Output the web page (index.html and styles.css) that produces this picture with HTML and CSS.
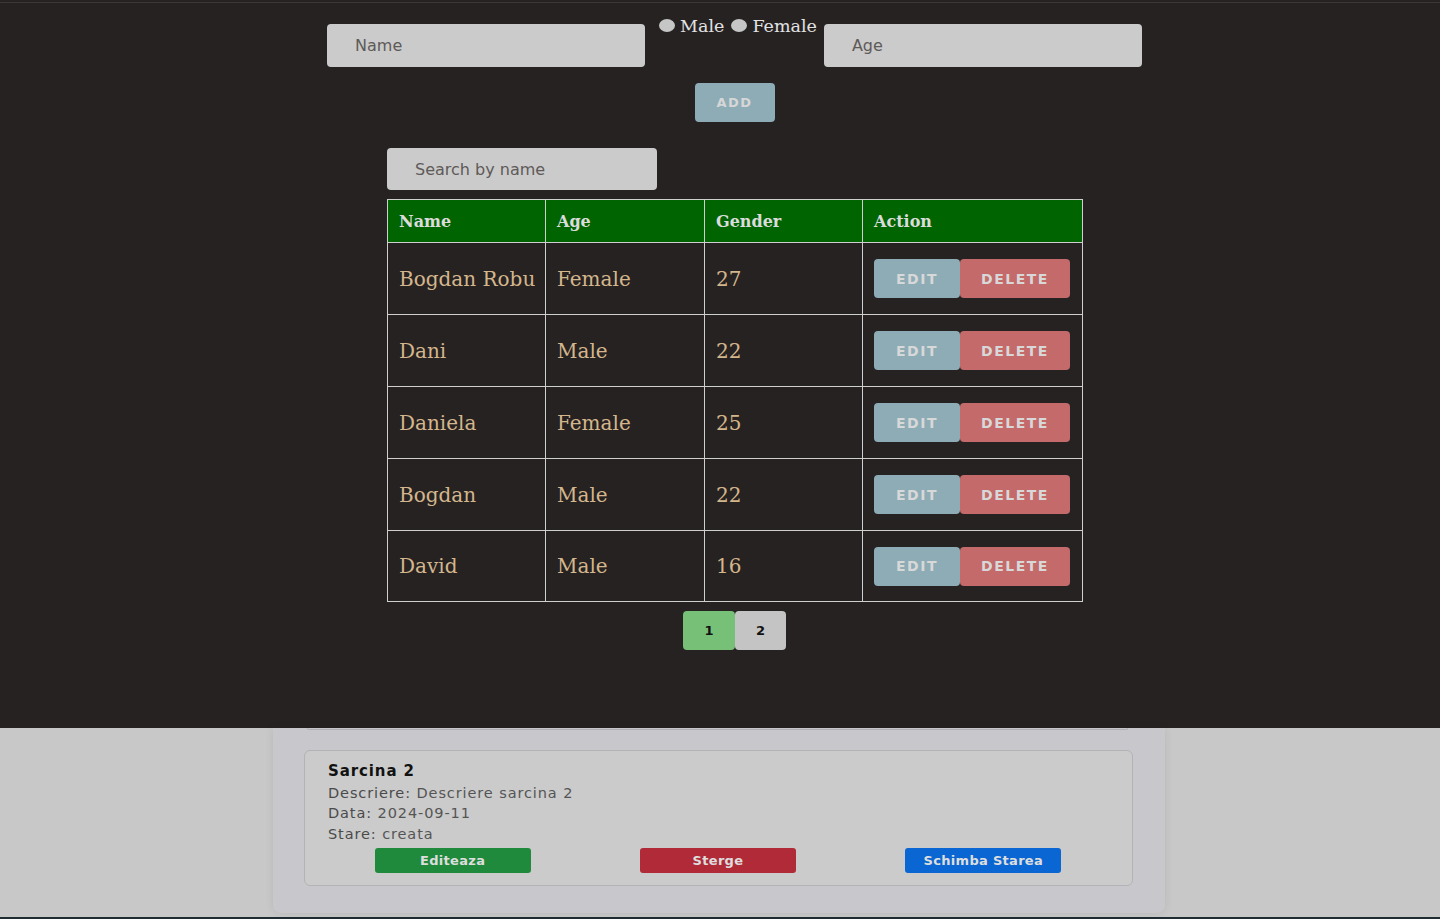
FILE: index.html
```html
<!DOCTYPE html>
<html lang="en">
<head>
<meta charset="utf-8">
<title>People</title>
<link rel="stylesheet" href="styles.css">
</head>
<body>
<section class="top">
  <div class="topline"></div>
  <div class="form-row">
    <div class="field">Name</div>
    <div class="radios">
      <span class="radio"></span><span class="rlabel">Male</span>
      <span class="radio r2"></span><span class="rlabel">Female</span>
    </div>
    <div class="field age">Age</div>
  </div>
  <div class="add-row"><button class="btn-add">ADD</button></div>
  <div class="list">
    <div class="search">Search by name</div>
    <table class="people">
      <thead>
        <tr><th class="c1">Name</th><th class="c2">Age</th><th class="c3">Gender</th><th class="c4">Action</th></tr>
      </thead>
      <tbody>
        <tr><td>Bogdan Robu</td><td>Female</td><td>27</td><td><div class="acts"><button class="edit">EDIT</button><button class="del">DELETE</button></div></td></tr>
        <tr><td>Dani</td><td>Male</td><td>22</td><td><div class="acts"><button class="edit">EDIT</button><button class="del">DELETE</button></div></td></tr>
        <tr><td>Daniela</td><td>Female</td><td>25</td><td><div class="acts"><button class="edit">EDIT</button><button class="del">DELETE</button></div></td></tr>
        <tr><td>Bogdan</td><td>Male</td><td>22</td><td><div class="acts"><button class="edit">EDIT</button><button class="del">DELETE</button></div></td></tr>
        <tr><td>David</td><td>Male</td><td>16</td><td><div class="acts"><button class="edit">EDIT</button><button class="del">DELETE</button></div></td></tr>
      </tbody>
    </table>
    <div class="pager"><button class="pg active">1</button><button class="pg">2</button></div>
  </div>
</section>
<section class="lower">
  <div class="panel">
    <div class="card-tail"></div>
    <div class="card">
      <div class="card-text">
        <h3 class="card-title">Sarcina 2</h3>
        <p class="line"><span class="lbl">Descriere:</span> Descriere sarcina 2</p>
        <p class="line"><span class="lbl">Data:</span> 2024-09-11</p>
        <p class="line"><span class="lbl">Stare:</span> creata</p>
      </div>
      <div class="card-actions">
        <button class="cbtn green">Editeaza</button>
        <button class="cbtn red">Sterge</button>
        <button class="cbtn blue">Schimba Starea</button>
      </div>
    </div>
  </div>
</section>
</body>
</html>
```

FILE: styles.css
```css
* { box-sizing: border-box; }
html, body { margin: 0; padding: 0; }
body {
  width: 1440px;
  height: 919px;
  overflow: hidden;
  background: #c8c8c8;
  font-family: "DejaVu Sans", sans-serif;
}
button { font-family: "DejaVu Sans", sans-serif; cursor: pointer; }

.top {
  height: 728px;
  background: #262222;
  padding-top: 2px;
  padding-left: 29px;
}
.topline {
  height: 1px;
  background: #3a3838;
  margin-left: -29px;
}

.form-row {
  display: flex;
  justify-content: center;
  align-items: flex-start;
  margin-top: 12px;
}
.field {
  width: 318px;
  height: 43px;
  margin-top: 9px;
  background: #cbcbcb;
  border-radius: 4px;
  padding-left: 28px;
  display: flex;
  align-items: center;
  font-size: 16px;
  color: #5e5a58;
}
.radios {
  display: flex;
  align-items: flex-start;
  margin: 0 7px 0 14px;
  font-family: "DejaVu Serif", serif;
  font-size: 17.5px;
  line-height: 22px;
  color: #e2e2e2;
}
.radio {
  width: 16px;
  height: 13px;
  margin-top: 4px;
  margin-right: 5px;
  border-radius: 50%;
  background: #c6c6c6;
}
.radio.r2 { margin-left: 7px; }

.add-row {
  display: flex;
  justify-content: center;
  margin-top: 16px;
}
.btn-add {
  width: 80px;
  height: 39px;
  border: none;
  border-radius: 4px;
  background: #8eacb6;
  color: #d6d6d6;
  font-weight: bold;
  font-size: 13px;
  letter-spacing: 1.5px;
}

.list {
  width: 695px;
  margin: 26px auto 0;
}
.search {
  width: 270px;
  height: 42px;
  background: #cbcbcb;
  border-radius: 4px;
  padding-left: 28px;
  display: flex;
  align-items: center;
  font-size: 16px;
  color: #5e5a58;
}

.people {
  margin-top: 9px;
  width: 695px;
  border-collapse: collapse;
  table-layout: fixed;
  font-family: "DejaVu Serif", serif;
}
.people th, .people td {
  border: 1px solid #cfcfcf;
  text-align: left;
  padding: 0 0 0 11px;
}
.people th {
  height: 43px;
  background: #006400;
  color: #dcdcdc;
  font-size: 16px;
  font-weight: bold;
}
.c1 { width: 158px; }
.c2 { width: 159px; }
.c3 { width: 158px; }
.c4 { width: 220px; }
.people td {
  height: 72px;
  color: #d4b68c;
  font-size: 20px;
}
.people tbody tr:last-child td { height: 71px; }
.acts { display: flex; }
.edit, .del {
  height: 39px;
  border: none;
  border-radius: 4px;
  color: #d8d8d8;
  font-weight: bold;
  font-size: 14px;
  letter-spacing: 1.5px;
  font-family: "DejaVu Sans", sans-serif;
}
.edit { width: 86px; background: #8eacb6; }
.del { width: 110px; background: #c46a6a; }

.pager {
  display: flex;
  justify-content: center;
  margin-top: 9px;
}
.pg {
  width: 51px;
  height: 39px;
  border: none;
  border-radius: 4px;
  background: #c4c4c4;
  color: #111;
  font-weight: bold;
  font-size: 13px;
}
.pg.active { width: 52px; background: #77c077; }

.lower {
  height: 191px;
  border-bottom: 2px solid #1f2c32;
}
.panel {
  width: 892px;
  height: 185px;
  margin-left: 273px;
  background: #c7c7cc;
  border-radius: 0 0 8px 8px;
  box-shadow: 0 0 8px rgba(0, 0, 0, 0.08);
}
.card-tail {
  height: 2px;
  margin: 0 37px 0 34px;
  border: 1px solid #b1b1b4;
  border-top: none;
  border-radius: 0 0 6px 6px;
}
.card {
  margin: 20px 32px 0 31px;
  height: 136px;
  background: #cbcbcb;
  border: 1px solid #b3b3b5;
  border-radius: 6px;
  padding: 10px 16px 0 15px;
}
.card-text { padding-left: 8px; }
.card-title {
  margin: 0;
  font-size: 15px;
  line-height: 21.5px;
  font-weight: bold;
  color: #111;
  letter-spacing: 0.9px;
}
.line {
  margin: 0;
  font-size: 14.5px;
  line-height: 20.5px;
  color: #555;
  letter-spacing: 0.9px;
}
.lbl { color: #4a4a4a; }
.card-actions {
  display: flex;
  justify-content: space-around;
  margin-top: 4px;
}
.cbtn {
  width: 156px;
  height: 25px;
  border: none;
  border-radius: 3px;
  color: #dedede;
  font-weight: bold;
  font-size: 13px;
  letter-spacing: 0.3px;
}
.green { background: #1f8a3b; }
.red { background: #b02a37; }
.blue { background: #0a66d2; }
```
